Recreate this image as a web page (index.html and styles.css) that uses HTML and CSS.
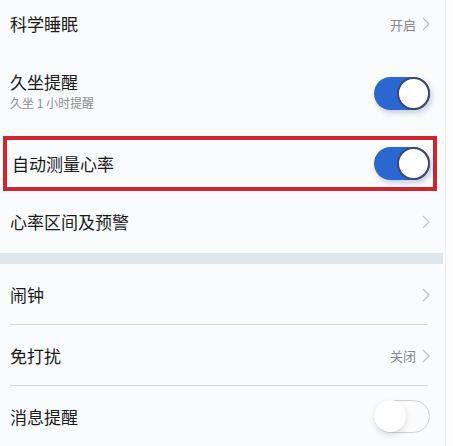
FILE: index.html
```html
<!DOCTYPE html>
<html>
<head>
<meta charset="utf-8">
<link rel="stylesheet" href="styles.css">
</head>
<body>
<div class="page">
  <div class="row r1">
    <div class="title">科学睡眠</div>
    <div class="right"><span class="val">开启</span><svg class="chev" width="8" height="14" viewBox="0 0 8 14"><polyline points="1,1 7,7 1,13" fill="none" stroke="#b9bcc0" stroke-width="1.2"/></svg></div>
  </div>
  <div class="row r2">
    <div class="texts">
      <div class="title">久坐提醒</div>
      <div class="sub">久坐 1 小时提醒</div>
    </div>
    <div class="toggle on"><div class="knob"></div></div>
  </div>
  <div class="row r3 boxed">
    <div class="title">自动测量心率</div>
    <div class="toggle on"><div class="knob"></div></div>
  </div>
  <div class="row r4">
    <div class="title">心率区间及预警</div>
    <div class="right"><svg class="chev" width="8" height="14" viewBox="0 0 8 14"><polyline points="1,1 7,7 1,13" fill="none" stroke="#c4c7cb" stroke-width="1.2"/></svg></div>
  </div>
  <div class="band"></div>
  <div class="row r5 line">
    <div class="title">闹钟</div>
    <div class="right"><svg class="chev" width="8" height="14" viewBox="0 0 8 14"><polyline points="1,1 7,7 1,13" fill="none" stroke="#b9bcc0" stroke-width="1.2"/></svg></div>
  </div>
  <div class="row r6 line">
    <div class="title">免打扰</div>
    <div class="right"><span class="val">关闭</span><svg class="chev" width="8" height="14" viewBox="0 0 8 14"><polyline points="1,1 7,7 1,13" fill="none" stroke="#b9bcc0" stroke-width="1.2"/></svg></div>
  </div>
  <div class="row r7">
    <div class="title">消息提醒</div>
    <div class="toggle off"><div class="knob"></div></div>
  </div>
</div>
</body>
</html>
```
FILE: styles.css
```css
html, body {
  margin: 0;
  padding: 0;
  background: #fdfdfe;
  font-family: "Noto Sans CJK SC", "Noto Sans", sans-serif;
}
.page {
  width: 445px;
  height: 446px;
  background: #fafbfd;
  border-right: 1px solid #eceef1;
  display: flex;
  flex-direction: column;
  overflow: hidden;
}
.row {
  display: flex;
  align-items: center;
  justify-content: space-between;
  padding: 0 15px 0 10px;
  box-sizing: border-box;
  flex: none;
}
.title {
  font-size: 17px;
  color: #1a1a1a;
  line-height: 22px;
}
.sub {
  font-size: 12px;
  color: #8a8d91;
  line-height: 16px;
  margin-top: 2px;
}
.right {
  display: flex;
  align-items: center;
  gap: 6px;
}
.val {
  font-size: 13px;
  color: #85888c;
}
.chev { display: block; }
.r1 { height: 50px; padding-bottom: 2px; }
.r2 { height: 86px; padding-bottom: 0; }
.r2 .texts { margin-top: -4px; }
.boxed {
  height: 55px;
  margin: 0 8px 0 3px;
  border: 4px solid #cd2630;
  padding: 0 3px 0 5px;
}
.r4 { height: 62px; }
.band {
  height: 11px;
  background: #dfe7ea;
  margin-right: 2px;
  flex: none;
}
.r5, .r6 { height: 61px; position: relative; }
.r7 { height: 61px; }
.line::after {
  content: "";
  position: absolute;
  left: 10px;
  right: 17px;
  bottom: 0;
  height: 1px;
  background: #d3d8da;
}
.toggle {
  width: 56px;
  height: 33px;
  border-radius: 17px;
  box-sizing: border-box;
  position: relative;
  margin-right: 0;
}
.toggle.on {
  background: #2b67d1;
  box-shadow: 2px 3px 5px rgba(40, 70, 130, 0.25);
}
.toggle.on .knob {
  position: absolute;
  right: 0;
  top: 0;
  width: 33px;
  height: 33px;
  border-radius: 50%;
  background: #ffffff;
  border: 2px solid #3d4a66;
  box-sizing: border-box;
}
.toggle.off {
  background: #fbfbfc;
  border: 1.5px solid #cfd2d5;
}
.toggle.off .knob {
  position: absolute;
  left: -1px;
  top: -1px;
  width: 32px;
  height: 32px;
  border-radius: 50%;
  background: #ffffff;
  box-shadow: 0 3px 6px rgba(0, 0, 0, 0.12);
}
```
